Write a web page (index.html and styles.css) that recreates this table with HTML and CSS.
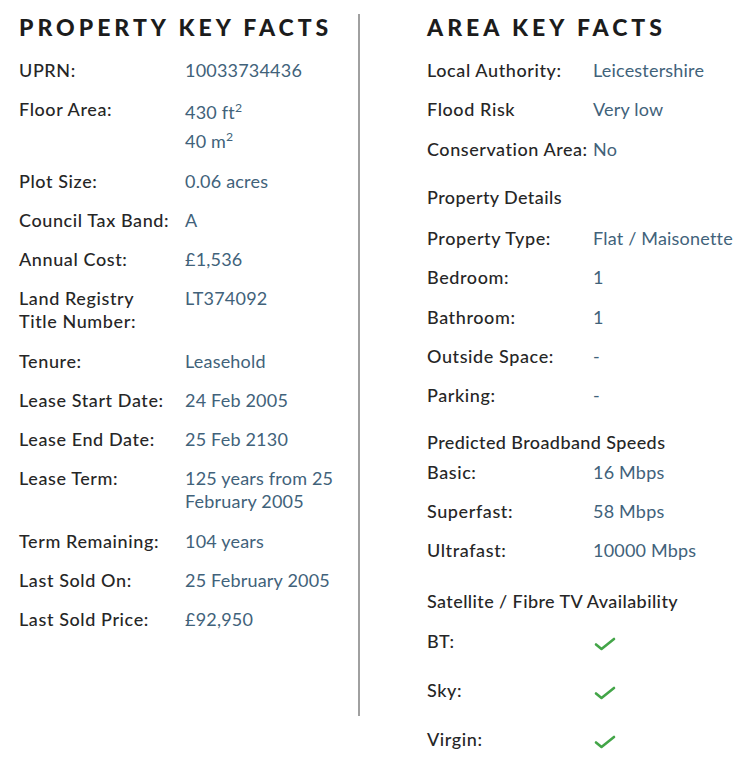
FILE: index.html
```html
<!DOCTYPE html>
<html lang="en">
<head>
<meta charset="utf-8">
<title>Key Facts</title>
<link rel="stylesheet" href="styles.css">
</head>
<body>
<div class="page">
  <section class="col col-left">
    <h2 class="title">PROPERTY KEY FACTS</h2>
    <div class="rows">
      <div class="row"><span class="label">UPRN:</span><span class="value">10033734436</span></div>
      <div class="row"><span class="label">Floor Area:</span><span class="value value-area">430 ft<sup>2</sup><br>40 m<sup>2</sup></span></div>
      <div class="row"><span class="label">Plot Size:</span><span class="value">0.06 acres</span></div>
      <div class="row"><span class="label">Council Tax Band:</span><span class="value">A</span></div>
      <div class="row"><span class="label">Annual Cost:</span><span class="value">£1,536</span></div>
      <div class="row"><span class="label">Land Registry<br>Title Number:</span><span class="value">LT374092</span></div>
      <div class="row"><span class="label">Tenure:</span><span class="value">Leasehold</span></div>
      <div class="row"><span class="label">Lease Start Date:</span><span class="value">24 Feb 2005</span></div>
      <div class="row"><span class="label">Lease End Date:</span><span class="value">25 Feb 2130</span></div>
      <div class="row"><span class="label">Lease Term:</span><span class="value">125 years from 25<br>February 2005</span></div>
      <div class="row"><span class="label">Term Remaining:</span><span class="value">104 years</span></div>
      <div class="row"><span class="label">Last Sold On:</span><span class="value">25 February 2005</span></div>
      <div class="row"><span class="label">Last Sold Price:</span><span class="value">£92,950</span></div>
    </div>
  </section>
  <div class="divider"></div>
  <section class="col col-right">
    <h2 class="title">AREA KEY FACTS</h2>
    <div class="rows">
      <div class="row"><span class="label">Local Authority:</span><span class="value">Leicestershire</span></div>
      <div class="row"><span class="label">Flood Risk</span><span class="value">Very low</span></div>
      <div class="row"><span class="label label-nowrap">Conservation Area:</span><span class="value">No</span></div>
      <h3 class="subhead subhead-details">Property Details</h3>
      <div class="row"><span class="label">Property Type:</span><span class="value">Flat / Maisonette</span></div>
      <div class="row"><span class="label">Bedroom:</span><span class="value">1</span></div>
      <div class="row"><span class="label">Bathroom:</span><span class="value">1</span></div>
      <div class="row"><span class="label">Outside Space:</span><span class="value">-</span></div>
      <div class="row"><span class="label">Parking:</span><span class="value">-</span></div>
      <h3 class="subhead subhead-broadband">Predicted Broadband Speeds</h3>
      <div class="row"><span class="label">Basic:</span><span class="value">16 Mbps</span></div>
      <div class="row"><span class="label">Superfast:</span><span class="value">58 Mbps</span></div>
      <div class="row"><span class="label">Ultrafast:</span><span class="value">10000 Mbps</span></div>
      <h3 class="subhead subhead-tv">Satellite / Fibre TV Availability</h3>
      <div class="row row-check"><span class="label">BT:</span><span class="value"><svg class="check" viewBox="0 0 22 14" width="22" height="14"><path d="M2 7.5 L7.5 12 L20 2" fill="none" stroke="#43a548" stroke-width="2.6" stroke-linecap="round" stroke-linejoin="round"/></svg></span></div>
      <div class="row row-check"><span class="label">Sky:</span><span class="value"><svg class="check" viewBox="0 0 22 14" width="22" height="14"><path d="M2 7.5 L7.5 12 L20 2" fill="none" stroke="#43a548" stroke-width="2.6" stroke-linecap="round" stroke-linejoin="round"/></svg></span></div>
      <div class="row row-check"><span class="label">Virgin:</span><span class="value"><svg class="check" viewBox="0 0 22 14" width="22" height="14"><path d="M2 7.5 L7.5 12 L20 2" fill="none" stroke="#43a548" stroke-width="2.6" stroke-linecap="round" stroke-linejoin="round"/></svg></span></div>
    </div>
  </section>
</div>
</body>
</html>
```

FILE: styles.css
```css
html, body {
  margin: 0;
  padding: 0;
  background: #ffffff;
}

body {
  font-family: "Lato", "Noto Sans", sans-serif;
  color: #262626;
}

.page {
  display: flex;
  align-items: flex-start;
  width: 744px;
  height: 768px;
  box-sizing: border-box;
  padding-top: 13px;
}

.col-left {
  width: 358px;
  padding-left: 19px;
  box-sizing: border-box;
}

.col-right {
  padding-left: 67px;
  flex: 1;
}

.divider {
  width: 2px;
  height: 702px;
  background: #a0a0a0;
  margin-top: 1px;
}

.title {
  margin: 0 0 18px 0;
  font-size: 23px;
  line-height: 28px;
  font-weight: 900;
  letter-spacing: 4px;
  color: #1c1c1c;
}

.rows {
  display: flex;
  flex-direction: column;
  gap: 16.25px;
}

.row {
  display: grid;
  grid-template-columns: 166px 1fr;
  font-size: 18px;
  line-height: 23px;
}

.label {
  font-weight: 500;
  letter-spacing: 0.6px;
  color: #262626;
}

.label-nowrap {
  white-space: nowrap;
  letter-spacing: 0.55px;
}

.value {
  font-weight: 400;
  letter-spacing: 0.2px;
  color: #41627a;
}

.value-area {
  line-height: 29px;
  margin-bottom: -3px;
}

.value sup {
  font-size: 0.68em;
  line-height: 0;
  vertical-align: 0.55em;
}

.subhead {
  margin: 0;
  font-size: 18px;
  line-height: 23px;
  font-weight: 500;
  letter-spacing: 0.4px;
  color: #262626;
}

.subhead-details {
  margin-top: 9px;
  margin-bottom: 2px;
}

.subhead-broadband {
  margin-top: 8px;
  margin-bottom: -10px;
}

.subhead-tv {
  margin-top: 12px;
  margin-bottom: -5px;
}

.row-check {
  line-height: 33px;
}

.check {
  display: block;
  margin-top: 12px;
  margin-left: 1px;
}
```
